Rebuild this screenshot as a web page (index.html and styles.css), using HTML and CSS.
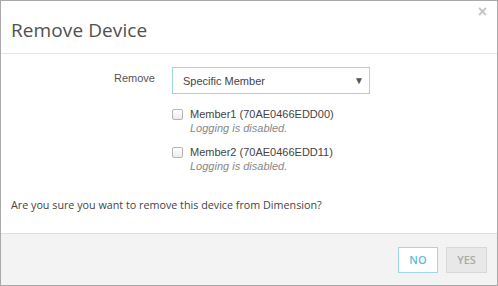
FILE: index.html
```html
<!DOCTYPE html>
<html>
<head>
<meta charset="utf-8">
<link rel="stylesheet" href="styles.css">
</head>
<body>
<div class="modal">
  <div class="header">
    <h1 class="title">Remove Device</h1>
    <span class="close">&times;</span>
  </div>
  <div class="body">
    <div class="row">
      <label class="label">Remove</label>
      <div class="select">
        <span>Specific Member</span>
        <span class="caret">&#9660;</span>
      </div>
    </div>
    <div class="members">
      <div class="member">
        <span class="box"></span>
        <div class="info">
          <div class="name">Member1 (70AE0466EDD00)</div>
          <div class="status">Logging is disabled.</div>
        </div>
      </div>
      <div class="member">
        <span class="box"></span>
        <div class="info">
          <div class="name">Member2 (70AE0466EDD11)</div>
          <div class="status">Logging is disabled.</div>
        </div>
      </div>
    </div>
    <p class="question">Are you sure you want to remove this device from Dimension?</p>
  </div>
  <div class="footer">
    <button class="btn btn-no">NO</button>
    <button class="btn btn-yes">YES</button>
  </div>
</div>
</body>
</html>
```
FILE: styles.css
```css
* { box-sizing: border-box; }
html, body { margin: 0; padding: 0; background: #fff; }
.modal {
  width: 498px;
  height: 286px;
  border: 1px solid #a9a9a9;
  display: flex;
  flex-direction: column;
  font-family: "Liberation Sans", Arial, sans-serif;
}
.header {
  height: 53px;
  border-bottom: 1px solid #e5e5e5;
  display: flex;
  align-items: flex-start;
  justify-content: space-between;
  padding: 0 10px 0 10px;
}
.title {
  margin: 18px 0 0 0;
  font-family: "Open Sans", sans-serif;
  font-weight: 400;
  font-size: 19px;
  line-height: 22px;
  color: #505050;
  letter-spacing: 0.1px;
}
.close {
  margin-top: 3px;
  font-size: 16px;
  font-weight: bold;
  color: #c4c4c4;
  line-height: 16px;
}
.body {
  flex: 1;
  padding: 13px 10px 0 10px;
}
.row {
  display: flex;
  align-items: center;
}
.label {
  width: 161px;
  text-align: right;
  font-size: 11px;
  color: #555;
  padding-right: 17px;
  margin-top: -5px;
}
.select {
  width: 198px;
  height: 27px;
  border: 1px solid #9fd8e0;
  display: flex;
  align-items: center;
  justify-content: space-between;
  padding: 0 5px 0 10px;
  font-size: 11px;
  color: #444;
}
.caret {
  font-size: 10px;
  color: #555;
}
.members {
  margin: 13px 0 0 161px;
  display: flex;
  flex-direction: column;
  gap: 10px;
}
.member {
  display: flex;
  align-items: flex-start;
}
.box {
  width: 11px;
  height: 11px;
  border: 1px solid #b5b5b5;
  border-radius: 2px;
  background: linear-gradient(#fff, #ececec);
  margin-top: 2px;
  margin-right: 7px;
}
.name {
  font-size: 11px;
  color: #444;
  line-height: 15px;
}
.status {
  font-size: 11px;
  font-style: italic;
  color: #888;
  line-height: 13px;
}
.question {
  margin: 25px 0 0 0;
  font-family: "Open Sans", sans-serif;
  font-size: 10.75px;
  color: #444;
}
.footer {
  height: 52px;
  border-top: 1px solid #dedede;
  background: #f3f3f3;
  display: flex;
  justify-content: flex-end;
  align-items: center;
  gap: 8px;
  padding: 0 10px 0 0;
}
.btn {
  height: 26px;
  font-family: "Open Sans", sans-serif;
  font-size: 11px;
  font-weight: 600;
  padding: 0;
  border-radius: 0;
}
.btn-no {
  width: 40px;
  background: #fff;
  border: 1px solid #9fd8e0;
  color: #5bc0d3;
}
.btn-yes {
  width: 41px;
  background: #e8e8e8;
  border: 1px solid #d8d8d8;
  color: #aaa;
}
```
